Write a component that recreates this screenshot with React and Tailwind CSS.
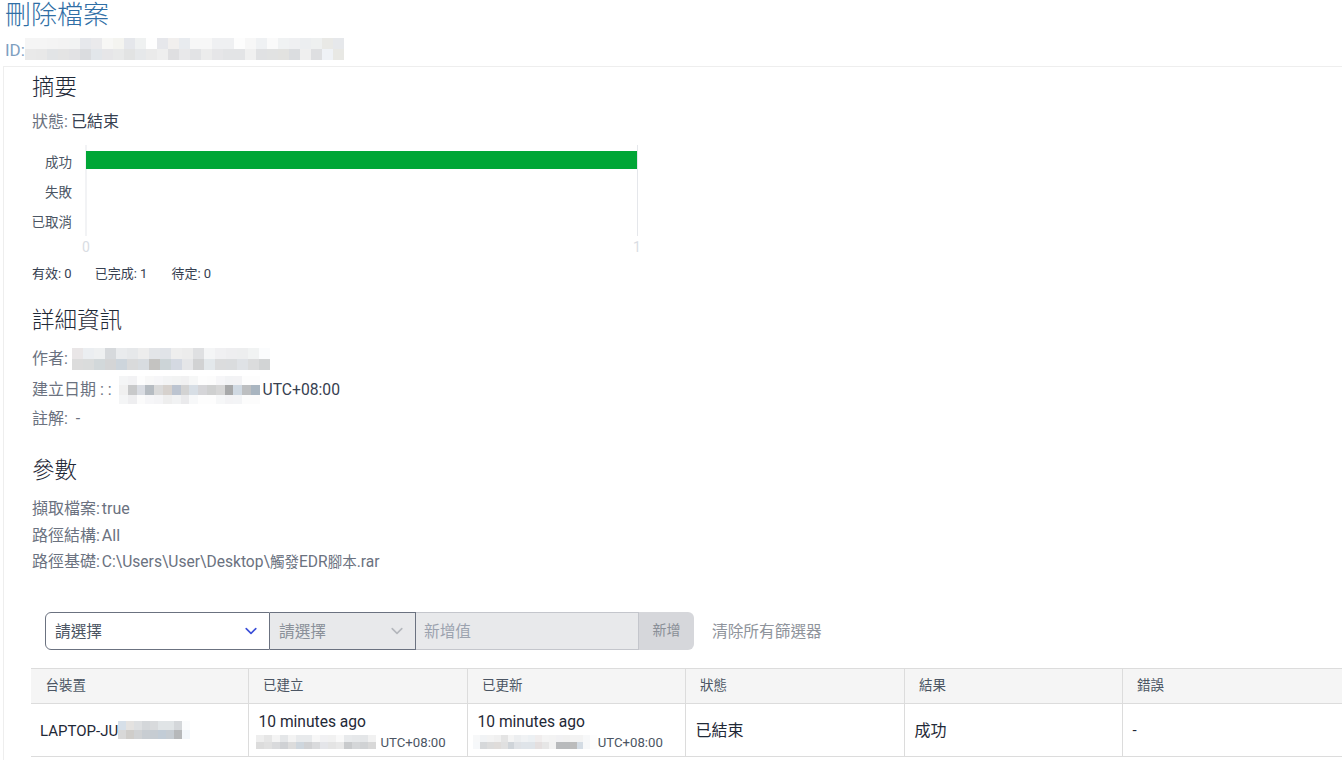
const blurId = [
  ['f5f5f5','f5f5f5','f4f4f4','f3f3f3','f2f3f3','e6e8ec','eaeaec','f7f7f5','f4f4f0','e5e7eb','eff1f1','fefefe','e6e7eb','f1efee','e8ebef','f7f7f7','f7f7f7','eff0f2','eff0f2','fdfdfd','f7f7f7','eff1f3','fafafa','f0f2f3','eff0f2','eceef0','eef0f0','e9e9e6','e6e8eb'],
  ['e9e9e9','e8e8e8','e2e4e6','e4e4e4','e2e2e4','dadcdf','e2e6ea','e6e6e8','e8e9e9','e2e3e3','e6e8ea','eaeaea','eeeeee','dfdfe1','e8e8ea','e2e3e5','ececec','e6e6e8','e3e4e6','e3e4e6','f0f0f0','e0e1e3','e1e2e2','e2e2e0','dbdde0','efefef','dedfe1','eff2f6','e8e8e4'],
];
const blurAuthor = [
  ['e9e6e7','ebeef1','eef0f1','d6d9dc','e9ebed','e6e8ea','ededed','e3e5e8','e0e3e8','eeeeee','ececec','dfe0e2','f4f5f6','f0f0f2','eeeef0','edeeef','f1f3f3','fbfcfd'],
  ['dcdcdc','dadcdc','d2d8da','d4d5d6','cdd5dc','d9dadb','d8dce0','c4c3c1','ccd4d7','d4d9e2','e5e6e8','d1d2d3','e3e8eb','dbdcdd','dadcde','dfe2e6','dbdcdd','d2d4d5'],
];
const blurDate = [
  ['f4f5f6','f2f2f4','fdfdfd','f8f8f8','f6f6f8','f3f4f5','f2f3f3','f1f1f2','f6f7f7','fdfdfd','fcfcfc','f6f6f8','f2f3f5','f3f3f5','fdfdfd','fdfdfd'],
  ['f0f0f0','c8c9ca','d9dce2','b6bcc2','dadada','d6d1cd','bcc4d0','d3d3d3','d7dee5','d5d5d8','cfd0d0','d6d6d6','a8a9aa','d0d9e2','bdbfc1','a9b5c0'],
  ['f4f5f6','eeeef0','fbfbfb','f6f6f8','f4f4f6','eeeeee','f1f2f3','eaeaec','f7f8f9','fdfdfd','fdfdfd','f6f7f8','f3f3f5','f3f4f6','fcfcfc','fcfcfc'],
];
const blurHost = [
  ['d6dfe8','e4e2e0','dddfe1','d4d7da','d8dadc','e0e4e6','e0e4e6','d4d7da','fbfcfd'],
  ['d8d8d8','cfcdca','d0d2d4','c8cdd2','c6ccd2','c2ccd6','c6ccd2','b6b8ba','f3f7fb'],
];
const blurTime = [
  ['eeeeee','e6e6e6','f4f4f4','e4e6e8','f3f3f3','e8eaec','e8eaec','f7f7f7','f1f1f3','f1f1f1','f9f9f9','e8eaec','e6e8ea','e4e6e8','f1f1f1'],
  ['dcdcdc','e0e0e0','d9dadc','cfd1d4','dcdcdc','ced6dd','d0d1d3','d9dadc','e4e5e9','e4e4e4','e8e8e8','c8cacc','d4d6d8','d0d2d4','d8d8d8'],
];
const blurTime2 = [
  ['f7f8f9','f1f3f5','f3f3f3','f0f0f0','e4e4e4','f4f4f4','eceef0','f0f2f4','ecf0f3','f0eded','f4f4f4','f3f3f3','f1f1f3','f1f1f1','f3f3f3','f3f3f3','f7f8f9','fdfdfd'],
  ['f6f8fa','d6d8da','dcdcdc','dfdcda','e0e0e0','cfd4d9','dfe2e6','dfe4e9','dfe4e9','e4dfdf','e6e6e6','f2f2f2','b8babc','b8babc','bcbcbc','d4dce4','f7f8f9','fdfdfd'],
];

function Blur({ data, w, h, className }) {
  const cols = data[0].length;
  return (
    <svg width={cols * w} height={data.length * h} className={className} shapeRendering="crispEdges" aria-hidden="true">
      {data.map((row, y) =>
        row.map((c, x) => <rect key={`${x}-${y}`} x={x * w} y={y * h} width={w} height={h} fill={`#${c}`} />)
      )}
    </svg>
  );
}

function Chart() {
  return (
    <svg width="640" height="114" className="block">
      <line x1="85" y1="4" x2="85" y2="95" stroke="#e5e7eb" />
      <line x1="636.5" y1="4" x2="636.5" y2="95" stroke="#e5e7eb" />
      <rect x="85" y="10" width="551" height="18" fill="#00a636" />
      <g fontSize="13.5" fill="#4b5563" textAnchor="end">
        <text x="71" y="26">成功</text>
        <text x="71" y="56">失敗</text>
        <text x="71" y="86">已取消</text>
      </g>
      <g fontSize="14" fill="#d9dde3" textAnchor="middle">
        <text x="85" y="111">0</text>
        <text x="636" y="111">1</text>
      </g>
    </svg>
  );
}

const headers = ['台裝置', '已建立', '已更新', '狀態', '結果', '錯誤'];

function TimeCell({ blur, w, pad, gap }) {
  return (
    <td className="border border-[#dcdcdc] px-0 py-0 align-top">
      <div className="pl-[10px] pt-[8px] text-[15.6px] leading-[20px] text-[#1f2937]">10 minutes ago</div>
      <div className="flex items-center mt-[1px] text-[13.2px] leading-[16px] text-[#4b5563]" style={{ paddingLeft: pad, gap }}>
        <Blur data={blur} w={w} h={7} />
        <span className="mt-[2px]">UTC+08:00</span>
      </div>
    </td>
  );
}

export default function App() {
  return (
    <div className="h-[760px] overflow-hidden bg-white font-['Roboto','Noto_Sans_CJK_TC',sans-serif] text-[16px] text-[#6b7280]">
      <h1 className="pl-[5px] pt-[1px] text-[26px] leading-[28px] font-light text-[#2f6ea5]">刪除檔案</h1>
      <div className="flex items-center h-[22px] mt-[9px] pl-[5px] text-[17px] text-[#7fa0bf]">
        <span className="mt-[3px]">ID:</span>
        <Blur data={blurId} w={11} h={11} />
      </div>
      <div className="mt-[6px] ml-[3px] border-l border-t border-[#eeeeee] h-[694px]">
        <section className="pl-[28px]">
          <h2 className="pt-[5px] text-[22.5px] leading-[30px] font-light text-[#1f2937]">摘要</h2>
          <div className="mt-[8px] leading-[24px]">狀態:<span className="ml-[3px] text-[#374151]">已結束</span></div>
        </section>
        <div className="-ml-[3px] mt-[7px]">
          <Chart />
        </div>
        <section className="pl-[28px]">
          <div className="flex gap-[23px] text-[13px] leading-[18px] mt-[10px] text-[#374151]">
            <span>有效: 0</span>
            <span>已完成: 1</span>
            <span className="ml-[1px]">待定: 0</span>
          </div>
          <h2 className="mt-[22px] text-[22.5px] leading-[30px] font-light text-[#1f2937]">詳細資訊</h2>
          <div className="flex items-center h-[22px] mt-[13px]">
            作者:
            <Blur data={blurAuthor} w={11} h={11} className="ml-[4px]" />
          </div>
          <div className="flex items-center h-[26px] mt-[7px]">
            建立日期 : :
            <Blur data={blurDate} w={8.8} h={9.3} className="ml-[7px]" />
            <span className="ml-[3px] text-[15.7px] text-[#374151]">UTC+08:00</span>
          </div>
          <div className="h-[22px] mt-[5px] leading-[22px]">註解: &nbsp;-</div>
          <h2 className="mt-[25px] text-[22.5px] leading-[30px] font-light text-[#1f2937]">參數</h2>
          <div className="mt-[11px] leading-[26.5px]">
            <div>擷取檔案: <span className="-ml-[2px]">true</span></div>
            <div>路徑結構: <span className="-ml-[2px]">All</span></div>
            <div>路徑基礎: <span className="-ml-[2px] text-[15.6px]">C:\Users\User\Desktop\<span className="text-[14.5px]">觸發</span>EDR<span className="text-[14.5px]">腳本</span>.rar</span></div>
          </div>
        </section>
        <div className="flex items-center mt-[35px] ml-[41px] h-[38px] text-[15.7px]">
          <div className="flex items-center justify-between w-[225px] h-full rounded-l-[6px] border border-[#6b7280] bg-white pt-[2px] pl-[9px] pr-[10px] text-[#4b5563]">
            請選擇
            <svg width="16" height="16" viewBox="0 0 20 20" fill="none" stroke="#3b4fd8" strokeWidth="2" strokeLinecap="round" strokeLinejoin="round" className="-mt-[2px]"><path d="M4 7l6 6 6-6" /></svg>
          </div>
          <div className="flex items-center justify-between w-[146px] h-full border-y border-r border-[#6b7280] bg-[#e8e9eb] pt-[2px] pl-[9px] pr-[10px] text-[#8a9099]">
            請選擇
            <svg width="16" height="16" viewBox="0 0 20 20" fill="none" stroke="#b4b7bc" strokeWidth="2" strokeLinecap="round" strokeLinejoin="round" className="-mt-[2px]"><path d="M4 7l6 6 6-6" /></svg>
          </div>
          <div className="flex items-center w-[223px] h-full border-y border-r border-[#c4c6cc] bg-[#e8e9eb] pt-[2px] pl-[8px] text-[#9ca3af]">新增值</div>
          <div className="flex items-center justify-center w-[55px] h-full rounded-r-[6px] bg-[#d6d7db] text-[14px] text-[#8a8f97]">新增</div>
          <div className="ml-[18px] pt-[2px] text-[#8f949c]">清除所有篩選器</div>
        </div>
        <table className="table-fixed border-collapse w-[1311px] ml-[27px] mt-[18px] text-[#1f2937]">
          <colgroup>
            <col className="w-[217px]" />
            <col className="w-[219px]" />
            <col className="w-[218px]" />
            <col className="w-[219px]" />
            <col className="w-[218px]" />
            <col className="w-[220px]" />
          </colgroup>
          <thead>
            <tr className="h-[35px] bg-[#f5f5f5]">
              {headers.map(h => (
                <th key={h} className="border border-[#dcdcdc] first:border-l-0 pl-[14.5px] text-left text-[13.5px] font-normal text-[#4b5563]">{h}</th>
              ))}
            </tr>
          </thead>
          <tbody>
            <tr className="h-[53px]">
              <td className="border border-[#dcdcdc] border-l-0 pl-[9px] text-[15px]">
                <div className="flex items-center">
                  <span className="mt-[4px]">LAPTOP-JU</span>
                  <Blur data={blurHost} w={8} h={9} />
                </div>
              </td>
              <TimeCell blur={blurTime} w={8} pad={7} gap={5} />
              <TimeCell blur={blurTime2} w={6.9} pad={5} gap={1} />
              <td className="border border-[#dcdcdc] pl-[10px] pt-[2px] text-[16px]">已結束</td>
              <td className="border border-[#dcdcdc] pl-[10px] pt-[2px] text-[16px]">成功</td>
              <td className="border border-[#dcdcdc] pl-[10px] pt-[2px] text-[15px]">-</td>
            </tr>
          </tbody>
        </table>
      </div>
    </div>
  );
}
